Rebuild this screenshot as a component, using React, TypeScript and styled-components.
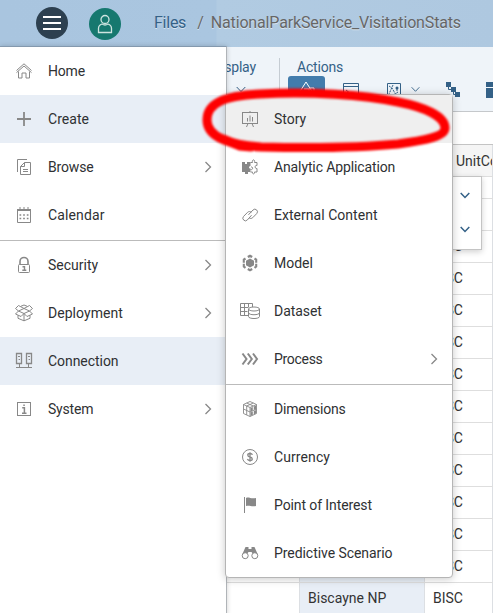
import React from "react";
import styled, { createGlobalStyle } from "styled-components";

const GlobalStyle = createGlobalStyle`
  body { margin: 0; overflow: hidden; background: #fff; }
  * { box-sizing: border-box; }
  svg { flex-shrink: 0; }
`;

const Page = styled.div`
  position: relative;
  width: 493px;
  height: 613px;
  overflow: hidden;
  font-family: Roboto, "Liberation Sans", sans-serif;
  font-size: 14px;
  color: #32363a;
  background: #fff;
`;

const Header = styled.header`
  display: flex;
  align-items: center;
  height: 47px;
  padding-left: 36px;
  background: linear-gradient(90deg, #a9c5df 0, #aac6e0 216px, #b1cbe2 217px, #aec8e0 100%);
`;

const RoundButton = styled.div<{ $color: string; $gap: number; $drop?: number }>`
  display: flex;
  align-items: center;
  justify-content: center;
  width: 32px;
  height: 32px;
  margin-right: ${(p) => p.$gap}px;
  margin-top: ${(p) => p.$drop ?? -1}px;
  border-radius: 50%;
  background: ${(p) => p.$color};
`;

const Crumb = styled.span<{ $color: string; $spacing: number; $gap?: number }>`
  margin-right: ${(p) => p.$gap ?? 0}px;
  margin-top: -2px;
  font-size: 16px;
  letter-spacing: ${(p) => p.$spacing}px;
  color: ${(p) => p.$color};
  text-shadow: 0 1px 0 rgba(255, 255, 255, 0.55);
  white-space: nowrap;
`;

const Toolbar = styled.div`
  display: flex;
  height: 65px;
  padding-left: 209px;
  background: #eff4f9;
  border-bottom: 1px solid #c5c8cb;
`;

const ToolGroup = styled.div<{ $width: number; $pad: number; $divider?: boolean }>`
  width: ${(p) => p.$width}px;
  margin-top: 11px;
  padding-left: ${(p) => p.$pad}px;
  flex: none;
  color: #346187;
  border-right: ${(p) => (p.$divider ? "1px solid #c5ccd3" : "none")};
`;

const GroupTitle = styled.div<{ $indent?: number }>`
  height: 18px;
  padding-left: ${(p) => p.$indent ?? 0}px;
  line-height: 19px;
  letter-spacing: -0.2px;
`;

const ToolRow = styled.div`
  display: flex;
  height: 27px;
  align-items: center;
`;

const ToolButton = styled.div<{ $active?: boolean; $width: number }>`
  display: flex;
  align-items: center;
  justify-content: center;
  flex: none;
  width: ${(p) => p.$width}px;
  height: 27px;
  border-radius: 3px;
  color: ${(p) => (p.$active ? "#fff" : "#346187")};
  background: ${(p) => (p.$active ? "#427cac" : "transparent")};
`;

const Gap = styled.div`
  height: 32px;
`;

const TableRow = styled.div<{ $head?: boolean; $height?: number }>`
  display: grid;
  grid-template-columns: 73px 125px 1fr;
  height: ${(p) => p.$height ?? 32}px;
  margin-left: 227px;
  border-top: 1px solid ${(p) => (p.$head ? "#c4c4c4" : "#dedede")};
  background: ${(p) => (p.$head ? "#f5f5f5" : "#fff")};
`;

const Cell = styled.div<{ $tint?: boolean; $head?: boolean }>`
  display: flex;
  align-items: center;
  padding-left: ${(p) => (p.$head ? 31 : 8)}px;
  padding-bottom: ${(p) => (p.$head ? 0 : 2)}px;
  border-right: 1px solid #dcdfe3;
  background: ${(p) => (p.$tint ? "#e8eef6" : "transparent")};
  color: #333;
  white-space: nowrap;
  overflow: hidden;
`;

const SideMenu = styled.nav`
  position: absolute;
  top: 46px;
  left: 0;
  width: 227px;
  height: 570px;
  background: #fff;
  border-top: 1px solid #8499ae;
  border-right: 1px solid #b0b4b8;
  box-shadow: 0 0 5px rgba(0, 0, 0, 0.18);
`;

const SubMenu = styled.nav`
  position: absolute;
  top: 94px;
  left: 225px;
  width: 228px;
  height: 484px;
  background: #fff;
  border: 1px solid #b5b5b5;
  border-radius: 4px;
  box-shadow: 0 1px 8px rgba(0, 0, 0, 0.22);
`;

const MenuRow = styled.div<{ $tint?: string; $ruled?: boolean }>`
  display: flex;
  align-items: center;
  height: ${(p) => (p.$ruled ? 49 : 48)}px;
  margin-top: ${(p) => (p.$ruled ? 1 : 0)}px;
  padding: 0 14px 0 12px;
  background: ${(p) => p.$tint ?? "transparent"};
  border-top: ${(p) => (p.$ruled ? "1px solid #bbb" : "none")};
  color: #888;
`;

const IconSlot = styled.span`
  display: flex;
  width: 24px;
  justify-content: center;
  margin-right: 12px;
`;

const MenuLabel = styled.span<{ $spacing?: number }>`
  flex: 1;
  padding-bottom: 1px;
  color: #2f3133;
  letter-spacing: ${(p) => p.$spacing ?? 0.1}px;
  white-space: nowrap;
`;

const Picker = styled.div`
  position: absolute;
  top: 176px;
  left: 440px;
  width: 42px;
  height: 74px;
  display: flex;
  flex-direction: column;
  align-items: flex-end;
  padding: 15px 10px 0 0;
  gap: 27px;
  color: #346187;
  background: #fff;
  border: 1px solid #c4c4c4;
  box-shadow: 0 2px 6px rgba(0, 0, 0, 0.18);
`;

const Marker = styled.svg`
  position: absolute;
  left: 0;
  top: 0;
  filter: blur(0.9px);
`;

type GlyphName = keyof typeof glyphs;

const glyphs = {
  home: (
    <>
      <path d="M2.5 9.5 10 2.8l7.5 6.7M2.5 11.6 10 5l7.5 6.6" />
      <path d="M4.5 10.5V17H8v-5h4v5h3.5v-6.5" />
    </>
  ),
  plus: <path d="M10 3v14M3 10h14" strokeWidth="1.8" />,
  browse: (
    <>
      <path d="M3.5 15V2.5H13M6.5 9.5V17.5H16.5V5.5H10.5z" />
      <path d="M6.5 9.5h4v-4M9 12.5h5M9 14.5h5" />
    </>
  ),
  calendar: (
    <>
      <path d="M3.5 4.5h13v13h-13zM3 4.5h14M3 5.5h14M6 2v2M10 2v2M14 2v2" />
      <path d="M5.5 10h9M5.5 13.5h9" strokeWidth="1.7" strokeDasharray="1.7 1.95" />
    </>
  ),
  lock: (
    <>
      <rect x="4.5" y="9.5" width="11" height="8" rx="1" />
      <path d="M6 9.5V6.5a4 4 0 0 1 8 0v3" strokeWidth="1.6" />
      <path d="M8.5 11.7h2v3.5M8.3 15.3h4" strokeWidth="1.4" />
    </>
  ),
  box: (
    <>
      <path d="M10 5.5 4.5 2.5 1.5 5.5 4.5 8l-3 3 5.5 2.5L10 10.5l3 3 5.5-2.5-3-3 3-2.5-3-3zM4.5 8l5.5-2.5L15.5 8 10 10.5zM4 12.3v3l6 2.5 6-2.5v-3M10 10.5v7.3" />
      <path d="M7 3.2l3-1.2 3 1.2" />
    </>
  ),
  connection: (
    <>
      <path d="M2.5 2.5h5v10h-5zM12.5 2.5h5v10h-5z" strokeWidth="1.3" />
      <path d="M4 5.5h2M14 5.5h2M4.6 8.5h1.4M14.6 8.5H16M5.5 13v4M14.5 13v4M2 16.5h16" />
    </>
  ),
  info: (
    <>
      <rect x="3.5" y="3.5" width="13" height="13" />
      <path d="M8.2 8.7h2.2v5M8 14.2h4.5M9.3 6.3h1.5" strokeWidth="1.5" />
    </>
  ),
  story: (
    <>
      <rect x="2.5" y="3.5" width="15" height="11" />
      <path d="M10 2v2M7.5 9v3.500M10 6.500v6M12.500 8v4.500M8 14.500 6.500 18M12 14.500l1.500 3.500" />
    </>
  ),
  puzzle: (
    <>
      <path d="M2 5h3v2h2V5h3.500v4c-2-.5-2 3 0 2.500V15H8v2H5v-2H2z" fill="currentColor" stroke="none" />
      <path d="M10.500 5.500h2c-1-3.500 3-3.500 2 0H17v3c-2.500-.8-2.500 3.500 0 3v3.500h-2.500c.5 2.500-2.500 2.500-2 0h-2M10.500 12.500c2.500 1 3-3 .5-2.500" />
    </>
  ),
  link: (
    <path d="m8.500 10 .2-.5 4.300-4.500a2.500 2.500 0 0 1 3.700 3.600l-4 4.100c-1 1-2.700 1-3.700 0M11.500 10l-.2.5L7.300 15a2.500 2.500 0 0 1-3.700-3.600l4-4.100c1-1 2.700-1 3.700 0" />
  ),
  model: (
    <>
      <path d="m10 5.500 4 2.200v4.600l-4 2.200-4-2.200V7.700z" fill="currentColor" stroke="none" />
      <path d="M7.800 4 10 2.800 12.200 4M14.500 5.500l1.700 1v3.200M16.200 10.800v2.700L14.500 14.800M12.200 16 10 17.200 7.800 16M5.500 14.800 3.800 13.500v-2.700M3.800 9.700V6.500l1.700-1" strokeWidth="2.100" />
    </>
  ),
  dataset: (
    <>
      <path d="M8 14.500H0.500v-12h12V6M.5 6.500h8M.5 10.500h7M4.500 2.500v12M8.500 2.500V6" />
      <ellipse cx="14" cy="8" rx="5.500" ry="2" />
      <path d="M8.500 8v7.500c0 2.700 11 2.700 11 0V8M8.500 11.700c0 2.700 11 2.700 11 0" />
    </>
  ),
  process: <path d="m2.500 4.500 4 5.500-4 5.500M7.800 4.500l4 5.500-4 5.500M13 4.500l4 5.500-4 5.500" strokeWidth="2" />,
  cube: (
    <>
      <path d="m10 2.500 6.500 3v9L10 17.500l-6.500-3v-9zM3.500 5.500 10 8.500l6.500-3M10 8.500v9M3.500 10l6.500 3 6.500-3M6.700 7v9M6.700 4l6.600 3M13.300 4 6.700 7" strokeWidth="0.9" />
      <path d="m10.500 9 2.300-1v3.500l-2.300 1zM13.800 7.500l2.200-1V10l-2.200 1zM10.500 13.500l2.300-1V16l-2.300 1zM13.800 12l2.200-1v3.500l-2.200 1z" fill="currentColor" stroke="none" />
    </>
  ),
  currency: (
    <>
      <circle cx="10" cy="10" r="7.5" />
      <path d="M12.500 7.700C12 6.700 11 6.500 10 6.500c-3 0-3 3 0 3.500s3 3.500 0 3.500c-1.200 0-2-.3-2.700-1.300M10 5.200v9.600" strokeWidth="1.3" />
    </>
  ),
  flag: (
    <>
      <path d="M4.500 2v16" />
      <path d="M6 3c3-1.500 4.500 1.200 10 0v8c-5 1.200-6-1.200-10 0z" fill="currentColor" stroke="none" />
    </>
  ),
  binoculars: (
    <>
      <path d="M5.500 4h3v2h3V4h3L18 12h-4l-2.500-3h-3L6 12H2z" fill="currentColor" stroke="none" />
      <circle cx="5.200" cy="12.700" r="3" fill="#fff" />
      <circle cx="14.800" cy="12.700" r="3" fill="#fff" />
    </>
  ),
};

const Glyph = ({ name }: { name: GlyphName }) => (
  <svg width="20" height="20" viewBox="0 0 20 20" fill="none" stroke="currentColor" strokeWidth="1">
    {glyphs[name]}
  </svg>
);

const Arrow = () => (
  <svg width="8" height="12" viewBox="0 0 8 12" fill="none" stroke="currentColor" strokeWidth="1.3">
    <path d="m1.500 1 5 5-5 5" />
  </svg>
);

const Chevron = ({ weight = 1, size = 10 }: { weight?: number; size?: number }) => (
  <svg width={size} height="7" viewBox="0 0 10 7" fill="none" stroke="currentColor" strokeWidth={weight}>
    <path d="m.7 1 4.300 4.500L9.300 1" />
  </svg>
);

interface Item {
  label: string;
  icon: GlyphName;
  arrow?: boolean;
  tint?: string;
  ruled?: boolean;
  spacing?: number;
}

const mainItems: Item[] = [
  { label: "Home", icon: "home", spacing: -0.2 },
  { label: "Create", icon: "plus", tint: "#e8eef6", spacing: 0.05 },
  { label: "Browse", icon: "browse", arrow: true, spacing: -0.15 },
  { label: "Calendar", icon: "calendar", spacing: 0.12 },
  { label: "Security", icon: "lock", arrow: true, spacing: 0, ruled: true },
  { label: "Deployment", icon: "box", arrow: true, spacing: 0.05 },
  { label: "Connection", icon: "connection", tint: "#e8eef6", spacing: -0.05 },
  { label: "System", icon: "info", arrow: true, spacing: -0.2 },
];

const createItems: Item[] = [
  { label: "Story", icon: "story", tint: "#efefef", spacing: 0 },
  { label: "Analytic Application", icon: "puzzle", spacing: -0.12 },
  { label: "External Content", icon: "link", spacing: 0.03 },
  { label: "Model", icon: "model", spacing: 0 },
  { label: "Dataset", icon: "dataset", spacing: -0.05 },
  { label: "Process", icon: "process", arrow: true, spacing: -0.3 },
  { label: "Dimensions", icon: "cube", ruled: true, spacing: -0.2 },
  { label: "Currency", icon: "currency", spacing: 0.1 },
  { label: "Point of Interest", icon: "flag", spacing: -0.1 },
  { label: "Predictive Scenario", icon: "binoculars", spacing: -0.06 },
];

const MenuItems = ({ items }: { items: Item[] }) => (
  <>
    {items.map((item) => (
      <MenuRow key={item.label} $tint={item.tint} $ruled={item.ruled}>
        <IconSlot><Glyph name={item.icon} /></IconSlot>
        <MenuLabel $spacing={item.spacing}>{item.label}</MenuLabel>
        {item.arrow && <Arrow />}
      </MenuRow>
    ))}
  </>
);

const rowNames = [...Array(12).fill(""), "Biscayne NP"];

export default function App() {
  return (
    <Page>
      <GlobalStyle />
      <Header>
        <RoundButton $color="#2d4050" $gap={21}>
          <svg width="18" height="16" viewBox="0 0 18 16" stroke="#fff" strokeWidth="2">
            <path d="M0 2h18M0 8h18M0 14h18" />
          </svg>
        </RoundButton>
        <RoundButton $color="#16786f" $gap={33} $drop={1}>
          <svg width="16" height="20" viewBox="0 0 16 20" fill="none" stroke="#cde3df" strokeWidth="1.3">
            <circle cx="8" cy="5.5" r="4" />
            <path d="M1.500 18.500v-4c0-3 2-4 3.500-4.500 2 1.300 4 1.300 6 0 1.500.5 3.500 1.500 3.500 4.500v4z" />
          </svg>
        </RoundButton>
        <Crumb $color="#346187" $spacing={-0.25} $gap={11}>Files</Crumb>
        <Crumb $color="#666" $spacing={0} $gap={7}>/</Crumb>
        <Crumb $color="#666" $spacing={-0.15}>NationalParkService_VisitationStats</Crumb>
      </Header>
      <Toolbar>
        <ToolGroup $width={71} $pad={0} $divider>
          <GroupTitle $indent={3}>Display</GroupTitle>
          <ToolRow><ToolButton $width={63}><Chevron /></ToolButton></ToolRow>
        </ToolGroup>
        <ToolGroup $width={213} $pad={8}>
          <GroupTitle $indent={9}>Actions</GroupTitle>
          <ToolRow>
            <ToolButton $width={37} $active>
              <svg width="18" height="18" viewBox="0 0 18 18" fill="none" stroke="currentColor">
                <path d="M1 12 8 1l7 11zM11 7h5v6M6 8h5v5" />
              </svg>
            </ToolButton>
            <ToolButton $width={52}>
              <svg width="16" height="16" viewBox="0 0 16 16" fill="none" stroke="currentColor">
                <path d="M.5 1.500h15v13H.5zM0 4.500h16M3 8l2.500 2L3 12M7 12h4" />
              </svg>
            </ToolButton>
            <ToolButton $width={34}>
              <svg width="16" height="16" viewBox="0 0 16 16" fill="none" stroke="currentColor">
                <path d="M1.500 1.500h13v13h-13z" />
                <path d="m3 4 3 2 4 7M7 3 3 12M12 10l-3 2" strokeDasharray="2 1" />
                <circle cx="11" cy="6" r="1.500" fill="currentColor" stroke="none" />
                <path d="M11 6v3" />
              </svg>
            </ToolButton>
            <Chevron size={9} />
            <ToolButton $width={66}>
              <svg width="16" height="18" viewBox="0 0 16 18" fill="none" stroke="currentColor">
                <path d="M3.500 4v4.500h5v5h5" />
                <path d="M1 1h5v5H1zM6 6h5v5H6zM10 11h5v5h-5z" fill="currentColor" stroke="none" />
              </svg>
            </ToolButton>
            <svg width="16" height="16" viewBox="0 0 16 16" fill="#346187">
              <path d="M0 0h16v5H0zM0 6h7v10H0zM8 6h8v4H8zM8 11h8v5H8z" />
            </svg>
          </ToolRow>
        </ToolGroup>
      </Toolbar>
      <Gap />
      <TableRow $head>
        <Cell /><Cell /><Cell $head>UnitCode</Cell>
      </TableRow>
      <TableRow $height={22}><Cell /><Cell $tint /><Cell /></TableRow>
      {rowNames.map((name, i) => (
        <TableRow key={i}>
          <Cell />
          <Cell $tint>{name}</Cell>
          <Cell>BISC</Cell>
        </TableRow>
      ))}
      <Picker>
        <Chevron weight={1.5} size={12} />
        <Chevron weight={1.5} size={12} />
      </Picker>
      <SideMenu><MenuItems items={mainItems} /></SideMenu>
      <SubMenu><MenuItems items={createItems} /></SubMenu>
      <Marker width="493" height="180" viewBox="0 0 493 180" fill="none" stroke="#fe0000" strokeLinecap="round">
        <path
          d="M207 120C207 104 222 96 260 94C310 91 364 95 398 102C424 107 445 116 445 128C445 136 428 140 398 144C356 148 302 148 261 147C230 145 207 137 207 120Z"
          strokeWidth="9"
        />
        <path d="M223 139 240 146 251 147" strokeWidth="9" />
      </Marker>
    </Page>
  );
}
